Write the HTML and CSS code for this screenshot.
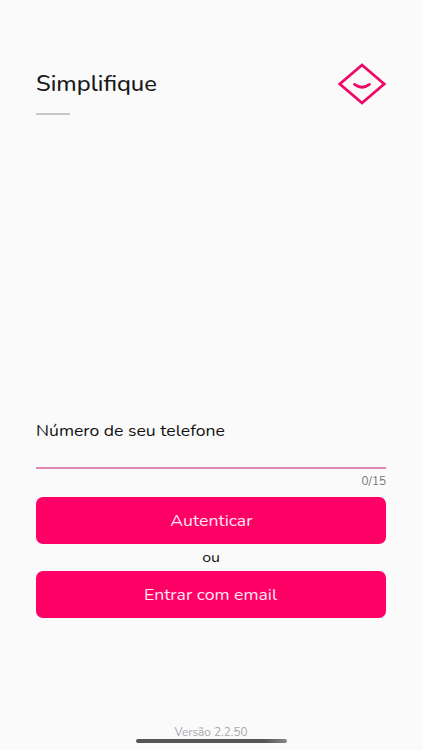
FILE: index.html
```
<!DOCTYPE html>
<html lang="pt-BR">
<head>
  <meta charset="UTF-8">
  <meta name="viewport" content="width=device-width, initial-scale=1.0">
  <title>Simplifique</title>
  <link rel="stylesheet" href="styles.css">
</head>
<body>
  <div class="screen">
    <header class="header">
      <h1><span class="wide left">Simplifique</span></h1>
      <svg class="logo" width="50" height="44" viewBox="0 0 50 44" fill="none" stroke="#ee0868" stroke-width="2.8">
        <path d="M25 3 L47.2 22 L25 41 L2.8 22 Z"/>
        <path d="M17.5 22.4 Q25 28 32.5 22.4" stroke-linecap="round"/>
      </svg>
    </header>
    <form class="login">
      <label for="phone"><span class="wide left">Número de seu telefone</span></label>
      <input type="tel" id="phone" maxlength="15">
      <div class="counter"><span class="wide right">0/15</span></div>
      <button type="button"><span class="wide">Autenticar</span></button>
      <div class="or"><span class="wide">ou</span></div>
      <button type="button"><span class="wide">Entrar com email</span></button>
    </form>
    <footer class="footer">
      <div class="version"><span class="wide">Versão 2.2.50</span></div>
      <div class="home-bar"></div>
    </footer>
  </div>
</body>
</html>
```
FILE: styles.css
```
* {
  box-sizing: border-box;
}
body {
  margin: 0;
  font-family: Nunito, Lato, "Open Sans", sans-serif;
  background: #fafafa;
  color: #111;
}
.screen {
  height: 750px;
  padding: 62px 36px 0;
  display: flex;
  flex-direction: column;
  overflow: hidden;
}
/* extended letterforms */
.wide {
  display: inline-block;
  transform: scaleX(1.1);
}
.left {
  transform-origin: left;
}
.right {
  transform-origin: right;
}
.header {
  display: flex;
  justify-content: space-between;
  height: 53px;
}
h1 {
  margin: 0;
  font-size: 21px;
  line-height: 44px;
  font-weight: 500;
  color: #1a1a1a;
}
h1 .wide {
  transform: scaleX(1.13);
}
h1::after {
  content: "";
  display: block;
  width: 34px;
  height: 2px;
  margin-top: 7px;
  background: #c8c8c8;
}
.logo {
  margin-right: -1px;
}
.login {
  margin-top: 305px;
  display: flex;
  flex-direction: column;
}
label {
  font-size: 16px;
  line-height: 22px;
}
input {
  height: 27px;
  padding: 0;
  border: none;
  border-bottom: 2px solid #e088b0;
  background: transparent;
  font: inherit;
  outline: none;
}
.counter {
  height: 28px;
  font-size: 11px;
  line-height: 26px;
  text-align: right;
  color: #777;
}
.counter .wide {
  transform: scaleX(1.06);
}
button {
  height: 47px;
  padding: 0;
  border: none;
  border-radius: 7px;
  background: #ff0066;
  color: #ffe8f1;
  font-family: inherit;
  font-size: 16px;
}
.or {
  height: 27px;
  font-size: 14.5px;
  line-height: 27px;
  text-align: center;
}
.footer {
  margin-top: auto;
  height: 25px;
  display: flex;
  flex-direction: column;
  align-items: center;
}
.version {
  height: 14px;
  font-size: 11px;
  line-height: 16px;
  color: #a8a8ae;
}
.version .wide {
  transform: scaleX(1.07);
}
.home-bar {
  width: 151px;
  height: 4px;
  border-radius: 2px;
  background: linear-gradient(to right, #555 85%, #888);
}
```
